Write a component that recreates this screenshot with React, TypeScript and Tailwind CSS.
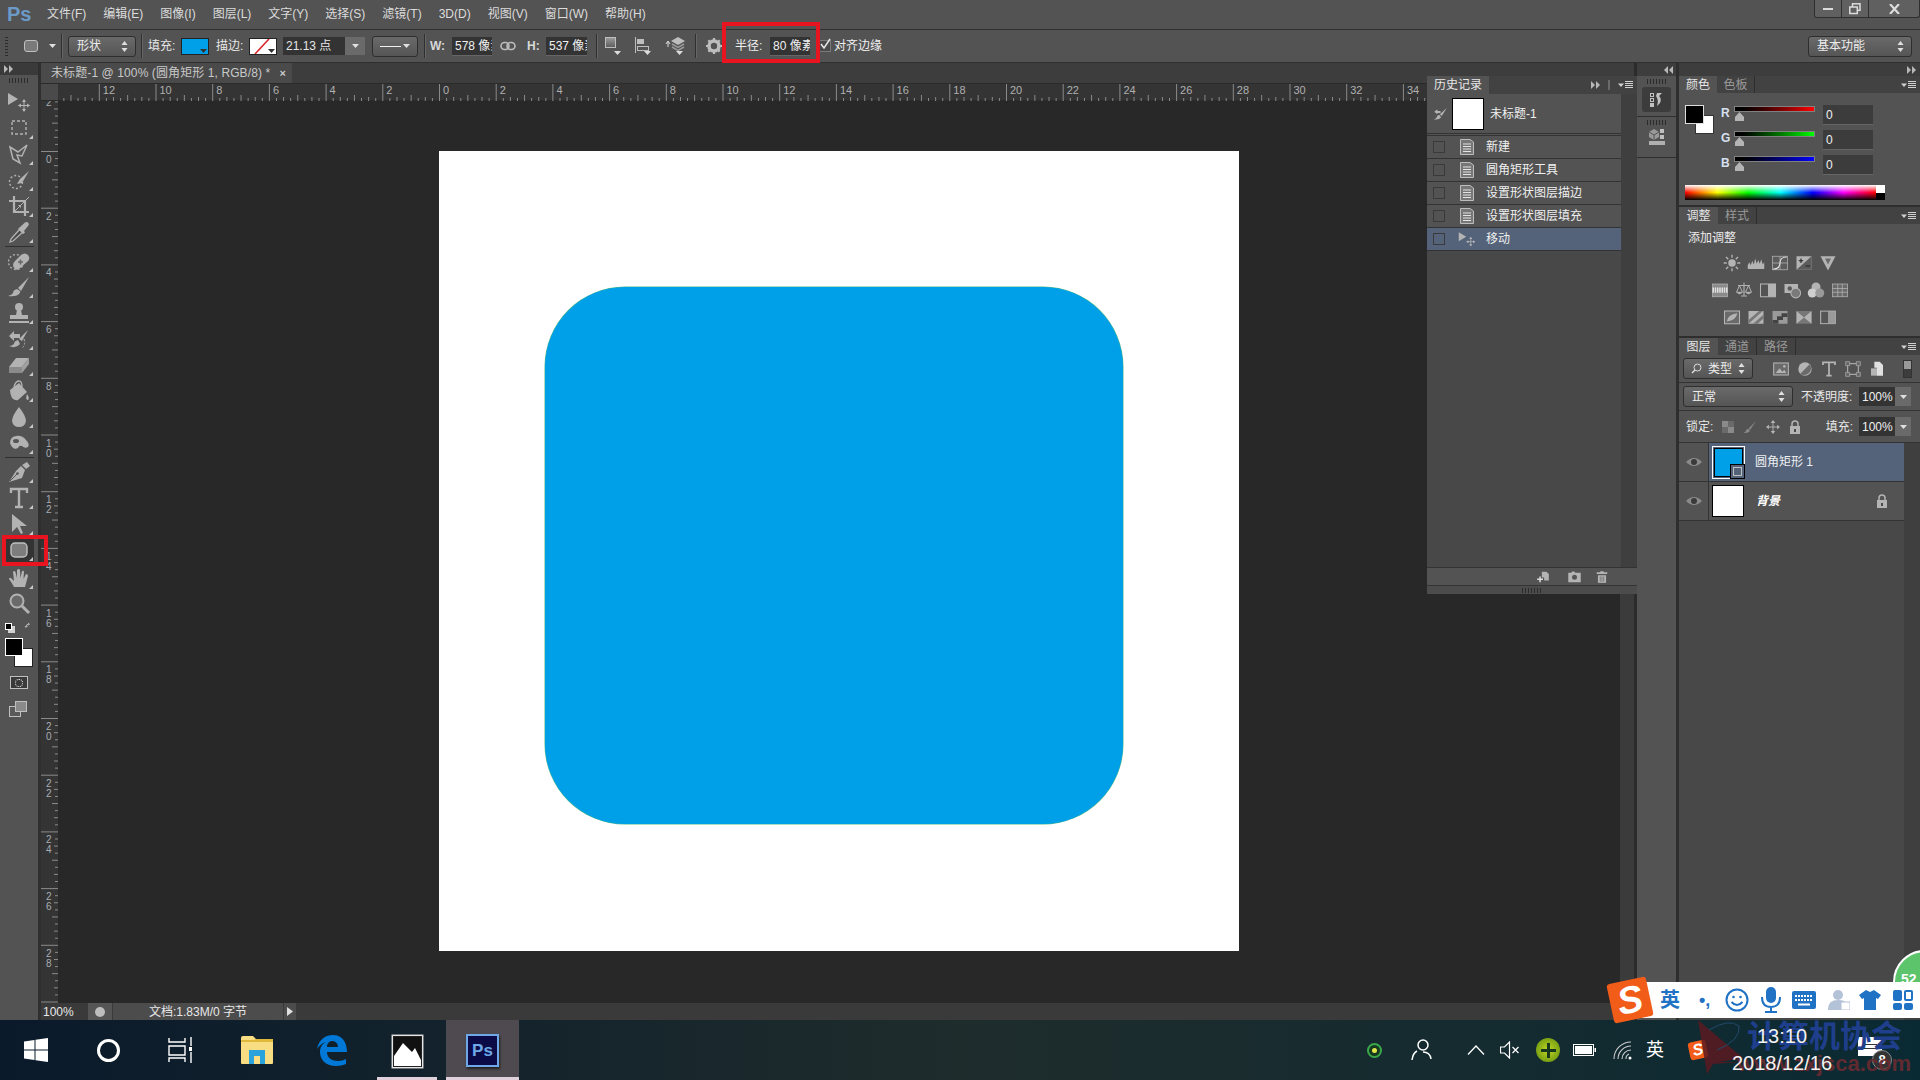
import type { ReactNode } from "react";

const G = "#b2b2b2";

function Ic({ children, s = 24, vb = 24, className = "" }: { children: ReactNode; s?: number; vb?: number; className?: string }) {
  return (
    <svg width={s} height={s} viewBox={`0 0 ${vb} ${vb}`} className={`block shrink-0 ${className}`}>
      {children}
    </svg>
  );
}

function Grip({ className = "" }: { className?: string }) {
  return <div className={`h-[5px] bg-[repeating-linear-gradient(90deg,#2b2b2b_0_1px,transparent_1px_3px)] ${className}`} />;
}

function UpDown() {
  return (
    <svg width="7" height="13" viewBox="0 0 7 13" className="shrink-0">
      <path d="M3.5 1 L6.5 5 H.5Z M3.5 12 L6.5 8 H.5Z" fill="#e0e0e0" />
    </svg>
  );
}

function Down({ c = "#e0e0e0" }: { c?: string }) {
  return (
    <svg width="7" height="4" viewBox="0 0 7 4" className="shrink-0">
      <path d="M0 0H7L3.5 4Z" fill={c} />
    </svg>
  );
}

function Sep() {
  return <div className="h-[24px] w-px shrink-0 bg-[#2f2f2f] shadow-[1px_0_0_#666]" />;
}

function FieldBox({ className = "", children }: { className?: string; children: ReactNode }) {
  return (
    <div className={`flex h-[18px] shrink-0 items-center overflow-hidden whitespace-nowrap bg-[#333333] pl-[3px] text-[12px] text-[#f0f0f0] shadow-[0_1px_0_#666] ${className}`}>
      {children}
    </div>
  );
}

function Dropdown({ className = "", children }: { className?: string; children: ReactNode }) {
  return (
    <div className={`flex h-[21px] shrink-0 items-center justify-between rounded-[3px] border border-[#2e2e2e] bg-linear-to-b from-[#6a6a6a] to-[#555555] px-[7px] text-[12px] text-[#ececec] ${className}`}>
      {children}
    </div>
  );
}

function PanelMenu() {
  return (
    <svg width="15" height="8" viewBox="0 0 15 8" className="shrink-0">
      <path d="M0 2.5H6L3 6Z" fill="#d0d0d0" />
      <path d="M7 .5H15M7 2.5H15M7 4.5H15M7 6.5H15" stroke="#d0d0d0" />
    </svg>
  );
}

function DoubleArrow({ left = false }: { left?: boolean }) {
  return (
    <svg width="9" height="8" viewBox="0 0 9 8" className={left ? "rotate-180" : ""}>
      <path d="M0 0L4 4L0 8ZM5 0L9 4L5 8Z" fill="#b8b8b8" />
    </svg>
  );
}

function MoveIcon({ s = 24 }: { s?: number }) {
  return (
    <Ic s={s}>
      <path d="M1 3V15L11 9Z" fill="#b4b4b4" />
      <path d="M17 10V21M11.5 15.5H22.5" stroke="#b4b4b4" />
      <path d="M17 9L19 12H15ZM17 22L15 19H19ZM11 15.5L14 13.5V17.5ZM23 15.5L20 13.5V17.5Z" fill="#b4b4b4" />
    </Ic>
  );
}

const tools1: { k: string; fly?: boolean; icon: ReactNode }[] = [
  { k: "move", icon: <MoveIcon /> },
  { k: "marquee", fly: true, icon: <Ic><rect x="5" y="5" width="14" height="13" fill="none" stroke={G} strokeWidth="1.4" strokeDasharray="3 2" /></Ic> },
  { k: "lasso", fly: true, icon: <Ic><path d="M3 5L11 10L20 3L15 14L10 13L13 21L6 17Z" fill="none" stroke={G} strokeWidth="1.5" /></Ic> },
  { k: "quick", fly: true, icon: <Ic><circle cx="9" cy="14" r="6.5" fill="none" stroke={G} strokeWidth="1.4" strokeDasharray="2 2" /><path d="M22 3L13 11L10 16L15 15Z" fill={G} /></Ic> },
  { k: "crop", fly: true, icon: <Ic><path d="M7 2V18H22M2 7H18V22" fill="none" stroke={G} strokeWidth="2.2" /><path d="M7 18L22 3" stroke={G} /><path d="M11 11H14V14Z" fill={G} /></Ic> },
  { k: "dropper", fly: true, icon: <Ic><path d="M4 19L13 9L16 12L6 21L3 22Z" fill="#4a4a4a" stroke={G} strokeWidth="1.3" /><path d="M13 7L18 2.5Q20 1.5 21.5 3Q22.5 5 21 6L17 11L18 12.5L16 14L11 9Z" fill={G} /></Ic> },
];

const tools2: { k: string; fly?: boolean; icon: ReactNode }[] = [
  { k: "heal", fly: true, icon: <Ic><circle cx="9" cy="13" r="7.5" fill="none" stroke={G} strokeWidth="1.3" strokeDasharray="2 2" /><path d="M8 20Q4 16 8 12L14 6Q18 3 21 6Q24 10 20 13L13 19Q10 22 8 20Z" fill={G} /><path d="M11 13h5M13.5 10.5v5" stroke="#666" strokeWidth="1.5" /></Ic> },
  { k: "brush", fly: true, icon: <Ic><path d="M22 2L11 13L14 16Z" fill={G} /><path d="M10 14Q6 15 6 18Q5 20 1 21Q9 22 12 19Q14 17 13 16Z" fill={G} /></Ic> },
  { k: "stamp", fly: true, icon: <Ic><circle cx="12" cy="6" r="4" fill={G} /><path d="M10 9H14L15 14H21V18H3V14H9Z" fill={G} /><rect x="2" y="20" width="20" height="2" fill={G} /></Ic> },
  { k: "hist", fly: true, icon: <Ic><path d="M21 3L12 12L15 14Z" fill={G} /><path d="M11 13Q7 14 7 17Q5 19 2 19Q9 22 13 17Z" fill={G} /><path d="M2 9L7 4V7H13V11H7V14Z" fill={G} /><path d="M17 12Q19 18 15 21" fill="none" stroke={G} strokeDasharray="2 1.5" /></Ic> },
  { k: "eraser", fly: true, icon: <Ic><path d="M9 5H22L15 14H2Z" fill={G} /><path d="M2 14H15V20H2Z" fill="#8a8a8a" /><path d="M15 14L22 5V11L15 20Z" fill="#a0a0a0" /></Ic> },
  { k: "bucket", fly: true, icon: <Ic><path d="M3 11L12 4L20 13L11 21Q8 22 5 19Q3 15 3 11Z" fill={G} /><path d="M7 9Q8 2 12 2Q15 2 15 8" fill="none" stroke={G} strokeWidth="1.3" /><path d="M20 15Q23 19 21 21Q18 21 20 15Z" fill={G} /></Ic> },
  { k: "blur", fly: true, icon: <Ic><path d="M12 2Q5 11 5 16Q6 22 12 22Q18 22 19 16Q19 11 12 2Z" fill={G} /></Ic> },
  { k: "smudge", fly: true, icon: <Ic><path d="M3 12Q3 6 9 5Q15 4 19 9Q23 13 21 16Q18 18 15 15Q12 14 11 17Q6 20 3 12Z" fill={G} /><ellipse cx="9" cy="10" rx="3" ry="2" fill="#555" /></Ic> },
];

const tools3: { k: string; fly?: boolean; sel?: boolean; icon: ReactNode }[] = [
  { k: "pen", fly: true, icon: <Ic><path d="M20 2L23 6L19 9L15 5Z" fill={G} /><path d="M14 6L18 10L15 18L2 22L9 11Z" fill={G} /><path d="M3 21L10 14" stroke="#555" /><circle cx="10.5" cy="13.5" r="1.3" fill="#555" /></Ic> },
  { k: "type", fly: true, icon: <Ic><path d="M4 7V3H20V7M12 3V21M8 21H16" fill="none" stroke={G} strokeWidth="2.4" /></Ic> },
  { k: "path", fly: true, icon: <Ic><path d="M5 2V20L10 15L14 22L16 21L13 14H20Z" fill={G} /></Ic> },
  { k: "shape", fly: true, sel: true, icon: <Ic><rect x="4" y="5" width="16" height="14" rx="4" fill="#7d7d7d" stroke="#c0c0c0" strokeWidth="1.4" /></Ic> },
];

const tools4: { k: string; fly?: boolean; icon: ReactNode }[] = [
  { k: "hand", fly: true, icon: <Ic><path d="M7 21Q5 17 2 13Q2 11 4 12L7 15L6 6Q7 4 8.5 6L10 12L10 4Q12 2 13 4L13.5 12L15 5Q17 4 17 6L16.5 13L19 8Q21 8 21 10L18 21Z" fill={G} /></Ic> },
  { k: "zoom", icon: <Ic><circle cx="10" cy="9" r="6.5" fill="#6a6a6a" stroke={G} strokeWidth="2" /><path d="M15 14L22 21" stroke={G} strokeWidth="3" /></Ic> },
];

function Tool({ fly, sel, children }: { fly?: boolean; sel?: boolean; children: ReactNode }) {
  return (
    <div className={`relative mx-auto flex h-[26px] w-[30px] items-center justify-center ${sel ? "bg-[#333333]" : ""}`}>
      {children}
      {fly && (
        <svg width="4" height="4" viewBox="0 0 4 4" className="absolute bottom-[2px] right-[1px]">
          <path d="M4 0V4H0Z" fill="#c8c8c8" />
        </svg>
      )}
    </div>
  );
}

function Toolbar() {
  return (
    <div className="flex h-full w-[38px] shrink-0 flex-col bg-[#535353]">
      <div className="flex h-[12px] items-center bg-[#3a3a3a] pl-[4px]"><DoubleArrow /></div>
      <Grip className="mx-auto mt-[3px] w-[20px]" />
      <div className="mt-[6px]">
        {tools1.map((t) => <Tool key={t.k} fly={t.fly}>{t.icon}</Tool>)}
      </div>
      <div className="mx-auto my-[1px] h-px w-[29px] bg-[#2f2f2f]" />
      <div>
        {tools2.map((t) => <Tool key={t.k} fly={t.fly}>{t.icon}</Tool>)}
      </div>
      <div className="mx-auto my-[1px] h-px w-[29px] bg-[#2f2f2f]" />
      <div>
        {tools3.map((t) => <Tool key={t.k} fly={t.fly} sel={t.sel}>{t.icon}</Tool>)}
      </div>
      <div className="mt-[2px]">
        {tools4.map((t) => <Tool key={t.k} fly={t.fly}>{t.icon}</Tool>)}
      </div>
      <div className="mt-[5px] flex items-center gap-[9px] pl-[5px]">
        <div className="relative size-[10px]">
          <div className="absolute left-[3px] top-[3px] size-[7px] bg-[#d0d0d0]" />
          <div className="absolute left-0 top-0 size-[7px] border border-white bg-black" />
        </div>
        <Ic s={12}><path d="M4 9Q4 3 10 3M8 1L11 3L8 6M2 7L4 10L7 7" fill="none" stroke="#d0d0d0" strokeWidth="1.5" transform="translate(0 1)" /></Ic>
      </div>
      <div className="relative mt-[4px] h-[30px] w-[33px] pl-[5px]">
        <div className="absolute left-[14px] top-[10px] size-[19px] border border-[#222] bg-white" />
        <div className="absolute left-[5px] top-0 size-[18px] border border-white bg-black" />
      </div>
      <div className="mt-[8px] flex justify-center">
        <div className="flex h-[13px] w-[18px] items-center justify-center border border-[#c0c0c0] bg-[#3a3a3a]">
          <div className="size-[8px] rounded-full border border-dotted border-white" />
        </div>
      </div>
      <div className="relative mx-auto mt-[12px] h-[18px] w-[20px]">
        <div className="absolute left-0 top-[5px] h-[11px] w-[12px] border border-[#c0c0c0] bg-[#5a5a5a]" />
        <div className="absolute left-[6px] top-0 h-[11px] w-[12px] border border-[#c0c0c0] bg-[#8a8a8a]" />
      </div>
    </div>
  );
}

const U = 28.35;

function HRuler() {
  const w = 1565;
  const o = 381;
  const ticks: ReactNode[] = [];
  for (let i = -56; i < 200; i++) {
    const x = o + (i * U) / 4;
    if (x < 0 || x > w) continue;
    const h = i % 8 === 0 ? 17 : i % 4 === 0 ? 6 : i % 2 === 0 ? 4 : 3;
    ticks.push(<line key={i} x1={x + 0.5} x2={x + 0.5} y1={17 - h} y2={17} stroke="#8a8a8a" />);
  }
  const labels: ReactNode[] = [];
  for (let n = -12; n <= 34; n += 2) {
    const x = o + n * U;
    labels.push(
      <text key={n} x={x + 4} y={10} fontSize="11" fill="#b0b0b0" fontFamily="Liberation Sans">
        {Math.abs(n)}
      </text>,
    );
  }
  return (
    <svg width={w} height={17} className="block">
      {ticks}
      {labels}
    </svg>
  );
}

function VRuler() {
  const h = 903;
  const o = 50;
  const ticks: ReactNode[] = [];
  for (let i = -8; i < 130; i++) {
    const y = o + (i * U) / 4;
    if (y < 0 || y > h) continue;
    const l = i % 8 === 0 ? 17 : i % 4 === 0 ? 6 : i % 2 === 0 ? 4 : 3;
    ticks.push(<line key={i} y1={y + 0.5} y2={y + 0.5} x1={17 - l} x2={17} stroke="#8a8a8a" />);
  }
  const labels: ReactNode[] = [];
  for (let n = -2; n <= 30; n += 2) {
    const y = o + n * U;
    String(Math.abs(n))
      .split("")
      .forEach((d, j) => {
        labels.push(
          <text key={`${n}-${j}`} x={5} y={y + 12 + j * 10} fontSize="10" fill="#a8adb4" fontFamily="Liberation Sans">
            {d}
          </text>,
        );
      });
  }
  return (
    <svg width={17} height={h} className="block">
      {ticks}
      {labels}
    </svg>
  );
}

function DocArea() {
  return (
    <div className="flex h-full w-[1599px] shrink-0 flex-col border-l-[3px] border-r-[3px] border-l-[#2f2f2f] border-r-[#2b2b2b] bg-[#282828]">
      <div className="flex h-[20px] shrink-0 bg-[#3d3d3d]">
        <div className="flex w-[251px] items-center justify-between bg-[#4a4a4a] pl-[10px] pr-[6px] text-[12px] tracking-[0.1px] text-[#c8c8c8]">
          <span className="whitespace-nowrap">未标题-1 @ 100% (圆角矩形 1, RGB/8) *</span>
          <span className="text-[11px] font-bold leading-none text-[#c8c8c8]">×</span>
        </div>
      </div>
      <div className="flex h-[18px] shrink-0 border-y border-[#2a2a2a] bg-[#343434]">
        <div className="h-full w-[17px] shrink-0 bg-[#4a4a4a]" />
        <HRuler />
      </div>
      <div className="flex min-h-0 flex-1">
        <div className="w-[17px] shrink-0 overflow-hidden bg-[#343434]">
          <VRuler />
        </div>
        <div className="min-w-0 flex-1 pl-[381px] pt-[50px]">
          <div className="h-[800px] w-[800px] bg-white pl-[106px] pt-[136px]">
            <div className="h-[537px] w-[578px] rounded-[80px] bg-[#00a0e9] shadow-[0_0_0_0.5px_#56b98a]" />
          </div>
        </div>
        <div className="w-[14px] shrink-0 bg-[#3b3b3b]" />
      </div>
      <div className="flex h-[17px] shrink-0 items-center bg-[#3a3a3a] text-[12px] text-[#e8e8e8]">
        <div className="flex h-full w-[47px] items-center pl-[2px]">100%</div>
        <div className="flex h-full w-[24px] items-center justify-center bg-[#555555]">
          <div className="size-[10px] rounded-full bg-[#bdbdbd]" />
        </div>
        <div className="flex h-full w-[172px] items-center border-x border-[#3a3a3a] bg-[#4c4c4c] pl-[36px]">文档:1.83M/0 字节</div>
        <div className="flex h-full w-[12px] items-center justify-center bg-[#4c4c4c]">
          <svg width="6" height="9" viewBox="0 0 6 9"><path d="M0 0L6 4.5L0 9Z" fill="#e0e0e0" /></svg>
        </div>
      </div>
    </div>
  );
}

function IconDock() {
  return (
    <div className="flex h-full w-[42px] shrink-0 flex-col border-r-[3px] border-[#2e2e2e] bg-[#535353]">
      <div className="flex h-[13px] items-center justify-end bg-[#3d3d3d] pr-[3px]"><DoubleArrow left /></div>
      <div className="h-[41px] border-b border-[#2e2e2e] pt-[3px]">
        <Grip className="mx-auto w-[20px]" />
        <div className="mx-auto mt-[3px] flex h-[25px] w-[29px] items-center justify-center gap-[2px] rounded-[3px] bg-[#3c3c3c]">
          <div className="flex flex-col gap-[1px]">
            <div className="size-[4px] border border-[#c0c0c0]" />
            <div className="size-[4px] border border-[#c0c0c0]" />
            <div className="size-[4px] bg-[#c0c0c0]" />
          </div>
          <svg width="7" height="15" viewBox="0 0 7 15"><path d="M1 1H6L3 4Q6 7 4 11L1 14Q3 8 0 4Z" fill="#c0c0c0" /></svg>
        </div>
      </div>
      <div className="h-[41px] border-b border-[#2e2e2e] pt-[3px]">
        <Grip className="mx-auto w-[20px]" />
        <div className="mx-auto mt-[4px] flex w-[16px] flex-wrap gap-x-[1px]">
          <svg width="10" height="11" viewBox="0 0 10 11"><path d="M5 0L10 3V8L5 11L0 8V3Z" fill="#999" /><path d="M0 3L5 6L10 3M5 6V11" stroke="#555" fill="none" /></svg>
          <div className="flex flex-col gap-[2px]">
            <div className="h-[4px] w-[4px] bg-[#c0c0c0]" />
            <div className="h-[4px] w-[4px] bg-[#c0c0c0]" />
          </div>
          <div className="mt-[1px] h-[4px] w-[16px] bg-[#b0b0b0]" />
        </div>
      </div>
    </div>
  );
}

function Tabs({ tabs, w }: { tabs: string[]; w: string }) {
  return (
    <div className="flex h-[17px] shrink-0 items-stretch bg-[#424242] shadow-[0_1px_0_#2e2e2e]">
      {tabs.map((t, i) => (
        <div
          key={t}
          className={`flex items-center justify-center text-[12px] ${w} ${i === 0 ? "bg-[#535353] text-[#e6e6e6]" : "border-r border-[#2e2e2e] text-[#9a9a9a]"}`}
        >
          {t}
        </div>
      ))}
      <div className="ml-auto flex items-center pr-[4px]"><PanelMenu /></div>
    </div>
  );
}

function ColorRow({ l, g }: { l: string; g: string }) {
  return (
    <div className="flex h-[25px] items-start">
      <span className="w-[13px] text-[12px] font-bold leading-[16px] text-[#d8e0f0]">{l}</span>
      <div className="relative mt-[1px] w-[81px]">
        <div className={`h-[6px] w-full border border-[#808080] ${g}`} />
        <svg width="11" height="9" viewBox="0 0 11 9" className="absolute left-0 top-[6px]">
          <path d="M5.5 0L10 5V9H1V5Z" fill="#b4b4b4" />
        </svg>
      </div>
      <div className="ml-[8px] flex h-[19px] w-[50px] items-center bg-[#3c3c3c] pl-[3px] text-[12px] text-[#f0f0f0] shadow-[0_1px_0_#666]">0</div>
    </div>
  );
}

const A = "#b4b4b4";
const adjust: ReactNode[][] = [
  [
    <Ic key="a" s={18}><circle cx="12" cy="12" r="5" fill={A} /><path d="M12 1V5M12 19V23M1 12H5M19 12H23M4 4L7 7M17 17L20 20M4 20L7 17M17 7L20 4" stroke={A} strokeWidth="1.8" /></Ic>,
    <Ic key="b" s={18}><path d="M1 20V15L3 11L5 15L7 9L9 14L11 6L13 13L15 8L17 13L19 7L21 14L23 11V20Z" fill={A} /></Ic>,
    <Ic key="c" s={18}><rect x="2" y="3" width="20" height="18" fill="#5c5c5c" stroke={A} /><path d="M2 12H22M12 3V21" stroke={A} /><path d="M3 20Q12 20 12 12T21 4" stroke="#e0e0e0" fill="none" strokeWidth="1.5" /></Ic>,
    <Ic key="d" s={18}><rect x="2" y="3" width="20" height="18" fill={A} /><path d="M2 21L22 3V21Z" fill="#5c5c5c" /><path d="M5 9H11M8 6V12M14 16H20" stroke="#222" strokeWidth="1.5" /></Ic>,
    <Ic key="e" s={18}><path d="M2 3H22L12 22Z" fill={A} /><path d="M8 6H16L12 14Z" fill="#6a6a6a" /></Ic>,
  ],
  [
    <Ic key="a" s={18}><rect x="2" y="4" width="20" height="17" fill="#8a8a8a" stroke={A} /><path d="M2 12H22" stroke="#e0e0e0" strokeDasharray="2 1" strokeWidth="7" /></Ic>,
    <Ic key="b" s={18}><path d="M12 2V5M4 6H20M6 6L2 15H10ZM18 6L14 15H22Z" stroke={A} fill="none" strokeWidth="1.3" /><path d="M2 15Q6 20 10 15ZM14 15Q18 20 22 15Z" fill={A} /><path d="M12 5V19M8 20H16" stroke={A} strokeWidth="1.6" /></Ic>,
    <Ic key="c" s={18}><rect x="2" y="4" width="20" height="17" fill="none" stroke={A} strokeWidth="1.4" /><rect x="12" y="4" width="10" height="17" fill={A} /></Ic>,
    <Ic key="d" s={18}><rect x="2" y="4" width="18" height="12" fill={A} /><circle cx="17" cy="16" r="6.5" fill="#7a7a7a" stroke={A} strokeWidth="1.4" /><circle cx="9" cy="10" r="3" fill="#5c5c5c" /></Ic>,
    <Ic key="e" s={18}><circle cx="12" cy="8" r="6" fill={A} /><circle cx="7" cy="16" r="6" fill="#cfcfcf" /><circle cx="17" cy="16" r="6" fill="#9a9a9a" /></Ic>,
    <Ic key="f" s={18}><rect x="2" y="4" width="20" height="17" fill="#6a6a6a" stroke={A} /><path d="M2 10H22M2 15H22M9 4V21M15 4V21" stroke={A} /></Ic>,
  ],
  [
    <Ic key="a" s={18}><rect x="2" y="4" width="20" height="17" fill="#6a6a6a" stroke={A} strokeWidth="1.4" /><path d="M5 18Q6 9 19 7Q18 16 5 18Z" fill={A} /></Ic>,
    <Ic key="b" s={18}><rect x="2" y="4" width="20" height="17" fill={A} /><path d="M2 16L16 4H21L2 21ZM8 21L22 9V14L14 21Z" fill="#777" /></Ic>,
    <Ic key="c" s={18}><rect x="2" y="4" width="20" height="17" fill="#9a9a9a" /><path d="M2 21V16H8V11H14V7H22V12H16V16H10V21Z" fill="#444" /></Ic>,
    <Ic key="d" s={18}><rect x="2" y="4" width="20" height="17" fill="#777" /><path d="M2 4L12 12.5L2 21ZM22 4L12 12.5L22 21Z" fill={A} /></Ic>,
    <Ic key="e" s={18}><rect x="2" y="4" width="20" height="17" fill="#9a9a9a" stroke={A} /><rect x="3" y="5" width="9" height="15" fill="#555" /></Ic>,
  ],
];

function FilterIcons() {
  return (
    <div className="ml-[20px] flex items-center gap-[8px]">
      <Ic s={16}><rect x="1" y="3" width="22" height="18" fill="#6a6a6a" stroke={A} strokeWidth="1.6" /><path d="M4 18L10 11L14 16L17 13L20 18Z" fill={A} /><circle cx="17" cy="8" r="2" fill={A} /></Ic>
      <Ic s={16}><circle cx="12" cy="12" r="10" fill={A} /><path d="M5 19L19 5A10 10 0 0 1 5 19Z" fill="#6a6a6a" /></Ic>
      <Ic s={16}><path d="M3 6V2H21V6M12 2V22M8 22H16" fill="none" stroke={A} strokeWidth="2.6" /></Ic>
      <Ic s={16}><rect x="4" y="4" width="16" height="16" fill="none" stroke={A} strokeWidth="1.6" /><path d="M1 1H7V7H1ZM17 1H23V7H17ZM1 17H7V23H1ZM17 17H23V23H17Z" fill="#666" stroke={A} /></Ic>
      <Ic s={16}><path d="M8 1H16L21 6V22H12V10H8Z" fill="#e0e0e0" /><rect x="3" y="11" width="9" height="11" fill={A} /></Ic>
    </div>
  );
}

function EyeIcon() {
  return (
    <svg width="16" height="10" viewBox="0 0 16 10" className="shrink-0">
      <path d="M0 5Q8 -3 16 5Q8 13 0 5Z" fill="#8a8a8a" />
      <circle cx="8" cy="5" r="3" fill="#3a3a3a" />
    </svg>
  );
}

function Lock({ c = "#b4b4b4" }: { c?: string }) {
  return (
    <svg width="12" height="14" viewBox="0 0 12 14" className="shrink-0">
      <path d="M3 6V4Q3 1 6 1T9 4V6" fill="none" stroke={c} strokeWidth="1.5" />
      <rect x="1" y="6" width="10" height="8" fill={c} />
      <rect x="5" y="9" width="2" height="3" fill="#4a4a4a" />
    </svg>
  );
}

function PctField() {
  return (
    <div className="flex h-[19px] shrink-0">
      <div className="flex w-[36px] items-center bg-[#333333] pl-[3px] text-[12px] text-[#f0f0f0]">100%</div>
      <div className="flex w-[16px] items-center justify-center bg-[#6a6a6a]"><Down /></div>
    </div>
  );
}

function RightPanels() {
  return (
    <div className="flex h-full min-w-0 flex-1 flex-col">
      <div className="flex h-[13px] shrink-0 items-center justify-end bg-[#3d3d3d] pr-[4px]"><DoubleArrow /></div>
      {/* colour */}
      <Tabs tabs={["颜色", "色板"]} w="w-[38px]" />
      <div className="h-[114px] shrink-0 border-b-[2px] border-[#2e2e2e] bg-[#535353] pl-[6px] pt-[12px]">
        <div className="flex">
          <div className="relative h-[30px] w-[30px] shrink-0">
            <div className="absolute left-[10px] top-[10px] size-[19px] border border-[#333] bg-white" />
            <div className="absolute left-0 top-0 size-[19px] border border-[#ddd] bg-black" />
          </div>
          <div className="ml-[6px]">
            <ColorRow l="R" g="bg-linear-to-r from-black to-[#ff0000]" />
            <ColorRow l="G" g="bg-linear-to-r from-black to-[#00ff00]" />
            <ColorRow l="B" g="bg-linear-to-r from-black to-[#0000ff]" />
          </div>
        </div>
        <div className="mt-[5px] flex h-[15px] w-[200px]">
          <div className="h-full flex-1 bg-[linear-gradient(to_bottom,#ffffff_0%,transparent_50%,#000000_100%),linear-gradient(to_right,#ff0000,#ffff00_17%,#00ff00_33%,#00ffff_50%,#0000ff_67%,#ff00ff_83%,#ff0000)]" />
          <div className="flex h-full w-[9px] flex-col">
            <div className="flex-1 bg-white" />
            <div className="flex-1 bg-black" />
          </div>
        </div>
      </div>
      {/* adjustments */}
      <Tabs tabs={["调整", "样式"]} w="w-[39px]" />
      <div className="h-[114px] shrink-0 border-b-[2px] border-[#2e2e2e] bg-[#535353]">
        <div className="pl-[9px] pt-[5px] text-[12px] leading-[18px] text-[#ececec]">添加调整</div>
        <div className="flex flex-col items-center gap-[9px] pr-[39px] pt-[7px]">
          {adjust.map((row, i) => (
            <div key={i} className="flex gap-[6px]">{row}</div>
          ))}
        </div>
      </div>
      {/* layers */}
      <Tabs tabs={["图层", "通道", "路径"]} w="w-[39px]" />
      <div className="flex h-[28px] shrink-0 items-center border-b border-[#333] bg-[#535353] pl-[4px]">
        <Dropdown className="w-[70px]">
          <svg width="11" height="11" viewBox="0 0 11 11"><circle cx="6.5" cy="4.5" r="3.5" fill="none" stroke="#ddd" /><path d="M4 7L1 10" stroke="#ddd" strokeWidth="1.5" /></svg>
          <span>类型</span>
          <UpDown />
        </Dropdown>
        <FilterIcons />
        <div className="ml-[18px] flex h-[18px] w-[9px] flex-col border border-[#333]">
          <div className="flex-1 bg-[#999]" />
          <div className="flex-1 bg-[#3c3c3c]" />
        </div>
      </div>
      <div className="flex h-[28px] shrink-0 items-center border-b border-[#333] bg-[#535353] pl-[4px]">
        <Dropdown className="w-[110px]">
          <span className="pl-[1px]">正常</span>
          <UpDown />
        </Dropdown>
        <span className="ml-[8px] w-[58px] text-[12px] text-[#e8e8e8]">不透明度:</span>
        <PctField />
      </div>
      <div className="flex h-[32px] shrink-0 items-center border-b border-[#333] bg-[#535353] pl-[7px]">
        <span className="w-[34px] text-[12px] text-[#e8e8e8]">锁定:</span>
        <div className="ml-[2px] flex items-center gap-[9px]">
          <div className="grid size-[12px] grid-cols-2 bg-[#6a6a6a]">
            <div className="bg-[#8a8a8a]" /><div /><div /><div className="bg-[#8a8a8a]" />
          </div>
          <Ic s={14}><path d="M22 2L10 14L12 17Z" fill="#8a8a8a" /><path d="M9 15Q5 16 5 19Q4 21 1 22Q9 23 12 19Z" fill="#8a8a8a" /></Ic>
          <Ic s={14}><path d="M12 2V22M2 12H22" stroke={A} strokeWidth="1.6" /><path d="M12 0L16 5H8ZM12 24L8 19H16ZM0 12L5 8V16ZM24 12L19 16V8Z" fill={A} /></Ic>
          <Lock />
        </div>
        <span className="ml-auto mr-[6px] text-[12px] text-[#e8e8e8]">填充:</span>
        <div className="mr-[9px]"><PctField /></div>
      </div>
      <div className="flex min-h-0 flex-1">
        <div className="flex-1 bg-[#484848]">
          <div className="flex h-[39px] border-b border-[#333]">
            <div className="flex w-[30px] items-center justify-center border-r border-[#333] bg-[#535353]"><EyeIcon /></div>
            <div className="flex flex-1 items-center bg-[#54637a] pl-[3px]">
              <div className="relative size-[33px] shrink-0">
                <div className="size-[33px] border border-white p-[1px]"><div className="size-full border border-black bg-[#00a0e9]" /></div>
                <div className="absolute bottom-0 right-0 flex size-[15px] items-center justify-center border border-black bg-[#54637a]">
                  <div className="size-[9px] border border-[#c0c0c0]" />
                </div>
              </div>
              <span className="ml-[10px] text-[12px] text-[#f0f0f0]">圆角矩形 1</span>
            </div>
          </div>
          <div className="flex h-[39px] border-b border-[#333]">
            <div className="flex w-[30px] items-center justify-center border-r border-[#333] bg-[#535353]"><EyeIcon /></div>
            <div className="flex flex-1 items-center bg-[#535353] pl-[3px]">
              <div className="size-[32px] shrink-0 border border-black bg-white" />
              <span className="ml-[12px] text-[12px] font-bold italic text-white">背景</span>
              <div className="ml-auto mr-[16px]"><Lock /></div>
            </div>
          </div>
        </div>
        <div className="w-[16px] shrink-0 bg-[#3f3f3f]" />
      </div>
    </div>
  );
}

function HistoryRow({ label, sel, icon }: { label: string; sel?: boolean; icon?: ReactNode }) {
  return (
    <div className={`flex h-[23px] items-center border-b border-[#333] ${sel ? "bg-[#54637a]" : "bg-[#535353]"}`}>
      <div className="ml-[6px] size-[12px] shrink-0 border border-[#3a3a3a]" />
      <div className="ml-[12px] flex w-[20px] shrink-0 justify-center">
        {icon ?? (
          <svg width="14" height="16" viewBox="0 0 14 16">
            <path d="M.5 .5H10L13.5 3V15.5H.5Z" fill="#777" stroke="#bdbdbd" />
            <path d="M3 5H11M3 7.5H11M3 10H11M3 12.5H11" stroke="#e4e4e4" />
          </svg>
        )}
      </div>
      <span className="ml-[9px] text-[12px] text-[#f0f0f0]">{label}</span>
    </div>
  );
}

function HistoryPanel() {
  return (
    <div className="absolute left-[1427px] top-[76px] flex h-[518px] w-[210px] flex-col">
      <div className="flex h-[18px] shrink-0 items-stretch bg-[#424242] shadow-[0_1px_0_#2e2e2e]">
        <div className="flex w-[62px] items-center justify-center bg-[#535353] text-[12px] text-[#e6e6e6]">历史记录</div>
        <div className="ml-auto flex items-center gap-[8px] pr-[4px]">
          <DoubleArrow />
          <div className="h-[10px] w-[2px] bg-[#6a6a6a]" />
          <PanelMenu />
        </div>
      </div>
      <div className="flex min-h-0 flex-1">
        <div className="w-[194px] bg-[#484848]">
          <div className="flex h-[42px] items-center border-b-[3px] border-double border-[#333] bg-[#535353]">
            <div className="ml-[6px] w-[19px]">
              <Ic s={15}><path d="M22 3L11 13L14 16Z" fill="#b4b4b4" /><path d="M10 14Q6 15 6 18Q4 21 1 21Q9 23 13 18Z" fill="#b4b4b4" /><path d="M2 9L7 5V8H12V11H7V13Z" fill="#b4b4b4" /></Ic>
            </div>
            <div className="size-[32px] border border-black bg-white" />
            <span className="ml-[6px] text-[12px] text-[#f0f0f0]">未标题-1</span>
          </div>
          <HistoryRow label="新建" />
          <HistoryRow label="圆角矩形工具" />
          <HistoryRow label="设置形状图层描边" />
          <HistoryRow label="设置形状图层填充" />
          <HistoryRow label="移动" sel icon={<MoveIcon s={18} />} />
        </div>
        <div className="w-[16px] bg-[#3f3f3f]" />
      </div>
      <div className="flex h-[19px] shrink-0 items-center border-b border-t border-[#333] bg-[#535353]">
        <div className="ml-[109px]">
          <Ic s={14}><path d="M10 3H18L22 7V18H14V13H10Z" fill={A} /><path d="M2 16H12M7 11V21" stroke="#dcdcdc" strokeWidth="2.6" /></Ic>
        </div>
        <div className="ml-[17px]">
          <Ic s={15}><path d="M2 6H7L8 4H12L13 6H22V21H2Z" fill={A} /><circle cx="12" cy="13" r="4" fill="#555" /></Ic>
        </div>
        <div className="ml-[13px]">
          <Ic s={14}><path d="M9 2H15V4H21V7H3V4H9Z" fill={A} /><path d="M5 9H19V22H5Z" fill={A} /><path d="M9 11V20M12 11V20M15 11V20" stroke="#555" /></Ic>
        </div>
      </div>
      <div className="flex h-[8px] shrink-0 items-center justify-center bg-[#4c4c4c]">
        <Grip className="w-[20px]" />
      </div>
    </div>
  );
}

function TrayIcon({ className, children }: { className: string; children: ReactNode }) {
  return <div className={`flex shrink-0 items-center justify-center ${className}`}>{children}</div>;
}

function Taskbar() {
  return (
    <div className="flex h-[60px] shrink-0 items-center bg-linear-to-r from-[#0a1a2b] via-[#1e2c2c] to-[#0a2a33] text-white">
      <TrayIcon className="w-[72px]">
        <svg width="24" height="24" viewBox="0 0 24 24"><path d="M0 3.5L10.5 2V11.5H0ZM11.5 1.8L24 0V11.5H11.5ZM0 12.5H10.5V22L0 20.5ZM11.5 12.5H24V24L11.5 22.2Z" fill="#fff" /></svg>
      </TrayIcon>
      <TrayIcon className="w-[72px]">
        <div className="size-[23px] rounded-full border-[3px] border-white" />
      </TrayIcon>
      <TrayIcon className="w-[72px]">
        <svg width="24" height="26" viewBox="0 0 24 26" fill="none" stroke="#fff" strokeWidth="1.4">
          <path d="M1 1V5H17V1M1 9H17V18H1ZM1 25V21H17V25M23 0V9M23 15V26" />
          <rect x="21" y="10" width="4" height="4" fill="#fff" stroke="none" />
        </svg>
      </TrayIcon>
      <TrayIcon className="w-[82px]">
        <svg width="32" height="28" viewBox="0 0 32 28">
          <path d="M0 2Q0 0 2 0H12L15 3H32V27Q32 28 31 28H1Q0 28 0 27Z" fill="#f8dd82" />
          <path d="M0 4H13L15 3H32V6H0Z" fill="#e0b93a" />
          <path d="M8 14H24V28H19V20H13V28H8Z" fill="#2aa3dc" />
        </svg>
      </TrayIcon>
      <TrayIcon className="w-[68px]">
        <svg width="32" height="32" viewBox="0 0 32 32">
          <path
            fillRule="evenodd"
            d="M1 15C3 5 10 1 17 1C26 1 31 8 31 18L11 18C11 24 16 27 22 27C25 27 28 26 30 25L30 30C27 31 24 32 20 32C9 32 4 25 4 18C4 13 6 10 10 8C6 9 3 12 1 15ZM11 13L22 13C22 9 19 7 16 7C13 7 11 10 11 13Z"
            fill="#0078d7"
          />
        </svg>
      </TrayIcon>
      <div className="ml-[11px] flex h-full w-[60px] shrink-0 flex-col items-center justify-end border-b-[3px] border-[#e0d0dc]">
        <svg width="33" height="35" viewBox="0 0 33 35" className="mb-[8px]">
          <rect x="1" y="1" width="31" height="33" fill="#fff" stroke="#ccc" />
          <rect x="2.5" y="2.5" width="28" height="30" fill="#fff" stroke="#222" />
          <path d="M3 3H30V26L24 14L21 18L12 9L3 22Z" fill="#111" />
        </svg>
      </div>
      <div className="ml-[9px] flex h-full w-[73px] shrink-0 items-center justify-center border-b-[3px] border-[#e0d0dc] bg-[#4f4a4f] pt-[3px]">
        <div className="flex size-[33px] items-center justify-center border-[2px] border-[#6ea8e8] bg-[#0b0b47] text-[17px] font-bold leading-none text-[#6ea8e8] shadow-[1px_2px_2px_#222]">Ps</div>
      </div>
      <div className="flex-1" />
      <TrayIcon className="w-[44px]">
        <div className="relative flex size-[15px] items-center justify-center rounded-full border-[2px] border-[#3aa84a] bg-[#16381f]">
          <div className="size-[5px] rounded-full bg-[#dfe84a]" />
        </div>
      </TrayIcon>
      <TrayIcon className="w-[50px]">
        <svg width="24" height="24" viewBox="0 0 24 24" fill="none" stroke="#fff" strokeWidth="1.5">
          <circle cx="14" cy="7" r="5" />
          <path d="M8 13Q4 15 3 22M14 14Q21 14 22 21" />
        </svg>
      </TrayIcon>
      <TrayIcon className="ml-[12px] w-[36px]">
        <svg width="18" height="10" viewBox="0 0 18 10" fill="none" stroke="#fff" strokeWidth="1.3"><path d="M1 9.5L9 1L17 9.5" /></svg>
      </TrayIcon>
      <TrayIcon className="w-[32px]">
        <svg width="20" height="18" viewBox="0 0 20 18" fill="none" stroke="#fff" strokeWidth="1.2"><path d="M1 6H5L10 1V17L5 12H1ZM13 6L19 12M19 6L13 12" transform="translate(-0.5 0)" /></svg>
      </TrayIcon>
      <TrayIcon className="w-[44px]">
        <div className="flex size-[24px] items-center justify-center rounded-full bg-[radial-gradient(circle,#c0d820,#5c8a10)]">
          <svg width="15" height="15" viewBox="0 0 15 15"><path d="M6 0H9V6H15V9H9V15H6V9H0V6H6Z" fill="#16381f" /></svg>
        </div>
      </TrayIcon>
      <TrayIcon className="w-[28px]">
        <svg width="23" height="12" viewBox="0 0 23 12"><rect x=".5" y=".5" width="20" height="11" fill="none" stroke="#fff" /><rect x="2" y="2" width="17" height="8" fill="#fff" /><rect x="21.5" y="4" width="1.5" height="4" fill="#fff" /></svg>
      </TrayIcon>
      <TrayIcon className="ml-[6px] w-[36px]">
        <svg width="19" height="19" viewBox="0 0 19 19" fill="none" stroke="#d0d0d0" strokeWidth="1.1"><path d="M1 18A17 17 0 0 1 18 1M5 18A13 13 0 0 1 18 5M9 18A9 9 0 0 1 18 9M13 18A5 5 0 0 1 16 13" /><circle cx="17" cy="17" r="1.5" fill="#fff" stroke="none" /></svg>
      </TrayIcon>
      <TrayIcon className="w-[30px] text-[18px]">英</TrayIcon>
      <TrayIcon className="w-[56px]">
        <div className="flex size-[18px] -rotate-12 items-center justify-center rounded-[3px] bg-[#f25c19] text-[16px] font-bold italic leading-none text-white">S</div>
      </TrayIcon>
      <div className="relative z-10 flex w-[112px] shrink-0 flex-col items-center text-[20px] leading-[27px] text-[#f2f2f2]">
        <span>13:10</span>
        <span>2018/12/16</span>
      </div>
      <TrayIcon className="w-[64px]">
        <div className="relative mb-[8px] flex h-[19px] w-[24px] flex-col justify-center gap-[3px] bg-white px-[5px]">
          <div className="h-px bg-[#333]" />
          <div className="h-px bg-[#333]" />
          <div className="absolute left-[14px] top-[13px] flex size-[20px] items-center justify-center rounded-full border border-[#888] bg-[#333] text-[13px] font-bold text-white">8</div>
        </div>
      </TrayIcon>
      <div className="w-[18px] shrink-0" />
    </div>
  );
}

function Ime() {
  return (
    <div className="absolute left-[1610px] top-[980px] flex h-[40px] w-[310px] items-center">
      <div className="z-10 flex size-[40px] shrink-0 -rotate-12 items-center justify-center rounded-[3px] bg-[#f25c19] text-[38px] font-bold italic leading-none text-white">S</div>
      <div className="-ml-[12px] flex h-[36px] flex-1 items-center bg-white pl-[22px]">
        <span className="w-[26px] text-[20px] font-bold leading-none text-[#1f72c4]">英</span>
        <span className="ml-[13px] w-[18px] text-[18px] font-bold leading-none text-[#1f72c4]">•,</span>
        <div className="ml-[8px] w-[28px]">
          <svg width="24" height="24" viewBox="0 0 24 24" fill="none" stroke="#1f72c4" strokeWidth="2"><circle cx="12" cy="12" r="10.5" /><path d="M6.5 14Q12 20 17.5 14" /><circle cx="8.5" cy="9" r="1.3" fill="#1f72c4" stroke="none" /><circle cx="15.5" cy="9" r="1.3" fill="#1f72c4" stroke="none" /></svg>
        </div>
        <div className="ml-[8px] w-[22px]">
          <svg width="20" height="26" viewBox="0 0 20 26"><rect x="5" y="0" width="10" height="16" rx="5" fill="#1f72c4" /><path d="M1 10Q1 20 10 20Q19 20 19 10M10 20V25M4 25H16" fill="none" stroke="#1f72c4" strokeWidth="2" /></svg>
        </div>
        <div className="ml-[9px] w-[26px]">
          <svg width="24" height="18" viewBox="0 0 24 18"><rect x="0" y="0" width="24" height="18" rx="2" fill="#1f72c4" /><path d="M3 5H21M3 9H21" stroke="#fff" strokeWidth="2" strokeDasharray="2 1" /><path d="M6 13.5H18" stroke="#fff" strokeWidth="2" /></svg>
        </div>
        <div className="ml-[10px] w-[24px]">
          <svg width="22" height="20" viewBox="0 0 22 20"><circle cx="10" cy="5" r="5" fill="#b4c2d8" /><path d="M0 19Q0 10 10 10Q18 10 18 14V20H0Z" fill="#b4c2d8" /><rect x="13" y="12" width="9" height="8" fill="#fff" stroke="#b4c2d8" /></svg>
        </div>
        <div className="ml-[7px] w-[24px]">
          <svg width="22" height="20" viewBox="0 0 22 20"><path d="M7 0L11 2L15 0L22 5L19 9L17 8V20H5V8L3 9L0 5Z" fill="#1f72c4" /></svg>
        </div>
        <div className="ml-[10px] grid size-[20px] grid-cols-2 gap-[2px]">
          <div className="rounded-[2px] bg-[#1f72c4]" />
          <div className="rounded-[2px] border-[2px] border-[#1f72c4]" />
          <div className="rounded-[2px] bg-[#1f72c4]" />
          <div className="rounded-[2px] bg-[#1f72c4]" />
        </div>
      </div>
    </div>
  );
}

function Watermark() {
  return (
    <>
      <svg width="60" height="60" viewBox="0 0 60 60" className="absolute left-[1695px] top-[1020px]">
        <path d="M3 0L48 38L24 42L46 42L18 44L12 54Z" fill="#5a1a22" opacity=".85" />
        <path d="M14 10Q34 -2 44 6Q46 20 22 30" fill="none" stroke="#234a6a" />
      </svg>
      <div className="absolute left-[1747px] top-[1019px] whitespace-nowrap text-[31px] font-bold leading-[36px] text-[#1f3f8c]">计算机协会</div>
      <div className="absolute left-[1737px] top-[1052px] whitespace-nowrap text-[22px] font-bold leading-[24px] text-[#6a2a30] opacity-90">www.zxjsca.com</div>
    </>
  );
}

function OptionsBar() {
  return (
    <div className="flex h-[34px] shrink-0 items-center border-y border-[#2f2f2f] bg-[#535353] pl-[5px] text-[12px] text-[#e6e6e6]">
      <div className="h-[20px] w-[3px] shrink-0 bg-[repeating-linear-gradient(0deg,#2b2b2b_0_1px,transparent_1px_3px)]" />
      <div className="ml-[16px] h-[12px] w-[14px] shrink-0 rounded-[3px] border border-[#c0c0c0] bg-[#7a7a7a]" />
      <div className="ml-[11px] w-[6px]"><Down /></div>
      <div className="ml-[6px]"><Sep /></div>
      <Dropdown className="ml-[6px] w-[68px]">
        <span className="pl-[1px]">形状</span>
        <UpDown />
      </Dropdown>
      <div className="ml-[5px]"><Sep /></div>
      <span className="ml-[6px] w-[30px] shrink-0">填充:</span>
      <div className="relative ml-[3px] h-[17px] w-[28px] shrink-0 border border-[#222] bg-[#00a0e9]">
        <div className="absolute bottom-[1px] right-[1px]"><Down c="#333" /></div>
      </div>
      <span className="ml-[7px] w-[30px] shrink-0">描边:</span>
      <div className="relative ml-[3px] h-[17px] w-[28px] shrink-0 overflow-hidden border border-[#222] bg-white">
        <svg width="26" height="15" viewBox="0 0 26 15" className="block"><path d="M5 15L19 0" stroke="#d9272e" strokeWidth="1.6" /></svg>
        <div className="absolute bottom-[1px] right-[1px]"><Down c="#333" /></div>
      </div>
      <div className="ml-[6px] flex h-[18px] w-[82px] shrink-0">
        <div className="flex flex-1 items-center bg-[#333333] pl-[3px]">21.13 点</div>
        <div className="flex w-[20px] items-center justify-center bg-[#6a6a6a]"><Down /></div>
      </div>
      <Dropdown className="ml-[7px] w-[46px] px-[3px]">
        <div className="h-px flex-1 bg-[#f0f0f0]" />
        <div className="ml-[2px]"><Down /></div>
      </Dropdown>
      <div className="ml-[6px]"><Sep /></div>
      <span className="ml-[5px] w-[16px] shrink-0 font-bold text-[#d8d8d8]">W:</span>
      <FieldBox className="ml-[6px] w-[40px]">578 像素</FieldBox>
      <div className="ml-[8px] w-[16px] shrink-0">
        <svg width="16" height="10" viewBox="0 0 16 10" fill="none" stroke="#bdbdbd" strokeWidth="1.6"><rect x="1" y="1.5" width="8" height="7" rx="3.5" /><rect x="7" y="1.5" width="8" height="7" rx="3.5" /></svg>
      </div>
      <span className="ml-[11px] w-[13px] shrink-0 font-bold text-[#d8d8d8]">H:</span>
      <FieldBox className="ml-[6px] w-[41px]">537 像素</FieldBox>
      <div className="ml-[9px]"><Sep /></div>
      <div className="relative ml-[8px] h-[18px] w-[16px] shrink-0">
        <div className="size-[11px] border border-[#bdbdbd] bg-linear-to-b from-[#999] to-[#5f5f5f]" />
        <div className="absolute bottom-0 right-0"><Down c="#ddd" /></div>
      </div>
      <div className="relative ml-[14px] h-[18px] w-[16px] shrink-0">
        <div className="absolute bottom-[2px] left-0 top-0 w-px bg-[#bdbdbd]" />
        <div className="absolute left-[2px] top-[2px] h-[5px] w-[7px] bg-[#bdbdbd]" />
        <div className="absolute left-[2px] top-[9px] h-[5px] w-[12px] border border-[#bdbdbd]" />
        <div className="absolute bottom-0 right-0"><Down c="#ddd" /></div>
      </div>
      <div className="relative ml-[14px] h-[18px] w-[20px] shrink-0">
        <svg width="20" height="16" viewBox="0 0 20 16"><path d="M3 10V5M1 7L3 4L5 7" stroke="#ddd" fill="none" /><path d="M13 0L20 4L13 8L6 4Z" fill="#bdbdbd" /><path d="M7 7L13 10.5L19 7M7 10L13 13.5L19 10" stroke="#9a9a9a" strokeWidth="1.5" fill="none" /></svg>
        <div className="absolute bottom-0 right-[2px]"><Down c="#ddd" /></div>
      </div>
      <div className="ml-[10px]"><Sep /></div>
      <div className="ml-[10px] w-[16px] shrink-0">
        <svg width="16" height="16" viewBox="0 0 16 16"><circle cx="8" cy="8" r="5" fill="none" stroke="#bdbdbd" strokeWidth="3.6" /><path d="M8 0V16M0 8H16M2.3 2.3L13.7 13.7M13.7 2.3L2.3 13.7" stroke="#bdbdbd" strokeWidth="2.2" strokeDasharray="2.5 11" /></svg>
      </div>
      <span className="ml-[13px] w-[28px] shrink-0 text-[#f0f0f0]">半径:</span>
      <FieldBox className="ml-[7px] w-[40px]">80 像素</FieldBox>
      <div className="relative ml-[9px] size-[12px] shrink-0 border border-[#7a7a7a] bg-[#4a4a4a]">
        <svg width="12" height="12" viewBox="0 0 12 12" className="absolute -left-[1px] -top-[3px]"><path d="M2 6L5 10L11 1" fill="none" stroke="#e8e8e8" strokeWidth="1.5" /></svg>
      </div>
      <span className="ml-[3px] whitespace-nowrap text-[#f0f0f0]">对齐边缘</span>
      <div className="flex-1" />
      <Dropdown className="mr-[8px] w-[104px]">
        <span className="pl-[1px]">基本功能</span>
        <UpDown />
      </Dropdown>
    </div>
  );
}

function MenuBar() {
  const items = ["文件(F)", "编辑(E)", "图像(I)", "图层(L)", "文字(Y)", "选择(S)", "滤镜(T)", "3D(D)", "视图(V)", "窗口(W)", "帮助(H)"];
  return (
    <div className="flex h-[29px] shrink-0 items-start bg-[#535353]">
      <div className="flex h-[28px] w-[47px] items-center pl-[7px] text-[20px] font-bold leading-none text-[#6b9ac9]">Ps</div>
      <div className="flex h-[28px] items-center gap-[17px] text-[12px] text-[#dcdcdc]">
        {items.map((m) => (
          <span key={m}>{m}</span>
        ))}
      </div>
      <div className="ml-auto flex h-[18px] rounded-b-[3px] border border-t-0 border-[#2f2f2f] bg-[#606060]">
        <div className="flex w-[27px] items-center justify-center border-r border-[#2f2f2f]">
          <div className="h-[2px] w-[10px] bg-[#dcdcdc]" />
        </div>
        <div className="flex w-[27px] items-center justify-center border-r border-[#2f2f2f]">
          <svg width="12" height="12" viewBox="0 0 12 12" fill="none" stroke="#dcdcdc" strokeWidth="1.5"><rect x="3.5" y=".8" width="7.5" height="6.5" /><rect x=".8" y="4" width="7.5" height="6.5" fill="#606060" /></svg>
        </div>
        <div className="flex w-[50px] items-center justify-center">
          <svg width="11" height="10" viewBox="0 0 11 10" stroke="#dcdcdc" strokeWidth="2.2"><path d="M1 0L10 10M10 0L1 10" /></svg>
        </div>
      </div>
    </div>
  );
}

export default function App() {
  return (
    <div className="relative flex h-[1080px] w-[1920px] flex-col overflow-hidden bg-[#535353] [font-family:'Liberation_Sans','Noto_Sans_CJK_SC',sans-serif]">
      <MenuBar />
      <OptionsBar />
      <div className="flex h-[957px] shrink-0">
        <Toolbar />
        <DocArea />
        <IconDock />
        <RightPanels />
      </div>
      <Taskbar />

      <HistoryPanel />
      <Watermark />
      {/* green speed ball, mostly cut by the window edge */}
      <div className="absolute left-[1893px] top-[950px] flex h-[64px] w-[64px] items-start justify-start rounded-full border-[2px] border-white bg-[#5cc46a] pl-[6px] pt-[17px] text-[14px] font-bold text-white">52</div>
      <Ime />
      {/* red marks drawn on the screenshot */}
      <div className="absolute left-[722px] top-[22px] h-[41px] w-[98px] border-[4px] border-[#e8141f]" />
      <div className="absolute left-[2px] top-[535px] h-[31px] w-[46px] border-[4px] border-[#e8141f]" />
    </div>
  );
}
